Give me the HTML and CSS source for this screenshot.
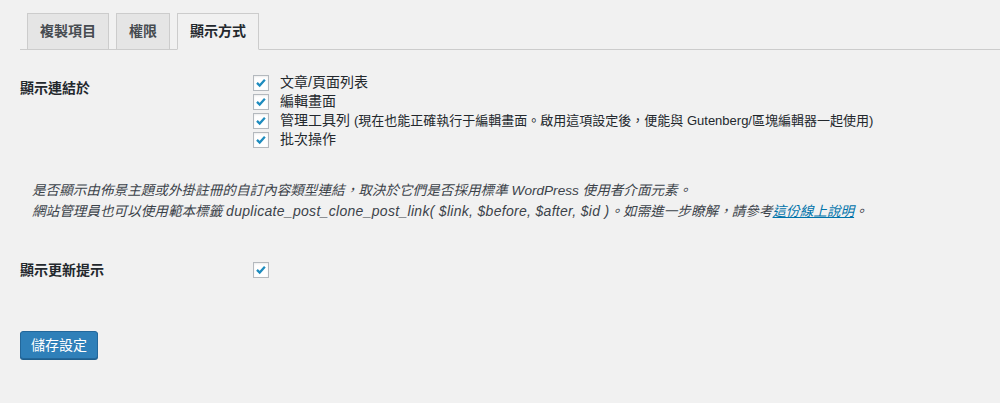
FILE: index.html
```html
<!DOCTYPE html>
<html lang="zh-Hant">
<head>
<meta charset="utf-8">
<title>Duplicate Post 設定</title>
<link rel="stylesheet" href="styles.css">
</head>
<body>
<div class="wrap">
  <nav class="tabs">
    <a class="tab">複製項目</a>
    <a class="tab">權限</a>
    <a class="tab active">顯示方式</a>
  </nav>

  <div class="row row-links">
    <div class="th">顯示連結於</div>
    <div class="td">
      <label class="opt"><span class="cb"><svg viewBox="0 0 16 16"><path d="M3.4 7.8 L6.5 10.9 L12.4 4.4" /></svg></span>文章/頁面列表</label>
      <label class="opt"><span class="cb"><svg viewBox="0 0 16 16"><path d="M3.4 7.8 L6.5 10.9 L12.4 4.4" /></svg></span>編輯畫面</label>
      <label class="opt"><span class="cb"><svg viewBox="0 0 16 16"><path d="M3.4 7.8 L6.5 10.9 L12.4 4.4" /></svg></span>管理工具列 <small class="note">(現在也能正確執行于編輯畫面。啟用這項設定後，便能與 Gutenberg/區塊編輯器一起使用)</small></label>
      <label class="opt"><span class="cb"><svg viewBox="0 0 16 16"><path d="M3.4 7.8 L6.5 10.9 L12.4 4.4" /></svg></span>批次操作</label>
    </div>
  </div>

  <p class="desc">是否顯示由佈景主題或外掛註冊的自訂內容類型連結，取決於它們是否採用標準 WordPress 使用者介面元素。<br>網站管理員也可以使用範本標籤 <span class="code">duplicate_post_clone_post_link( $link, $before, $after, $id )</span>。如需進一步瞭解，請參考<a class="link" href="#">這份線上說明</a>。</p>

  <div class="row row-notice">
    <div class="th">顯示更新提示</div>
    <div class="td">
      <span class="cb"><svg viewBox="0 0 16 16"><path d="M3.4 7.8 L6.5 10.9 L12.4 4.4" /></svg></span>
    </div>
  </div>

  <div class="submit">
    <button class="btn" type="button">儲存設定</button>
  </div>
</div>
</body>
</html>
```

FILE: styles.css
```css
html, body {
  margin: 0;
  padding: 0;
  background: #f1f1f1;
}
body {
  font-family: "Liberation Sans", "Noto Sans CJK TC", sans-serif;
  font-size: 14px;
  color: #23282d;
  height: 403px;
  overflow: hidden;
}
.wrap {
  padding: 12px 0 0 20px;
}
.tabs {
  display: flex;
  align-items: flex-end;
  border-bottom: 1px solid #cccccc;
  padding-left: 7px;
  gap: 7px;
  height: 37px;
}
.tab {
  display: block;
  box-sizing: border-box;
  height: 37px;
  padding: 0 12px;
  line-height: 35px;
  border: 1px solid #cccccc;
  background: #e5e5e5;
  color: #464b50;
  font-weight: 700;
  font-size: 14px;
  margin-bottom: -1px;
  border-bottom-color: #cccccc;
}
.tab.active {
  background: #f1f1f1;
  color: #23282d;
  border-bottom-color: #f1f1f1;
}
.row {
  display: flex;
}
.th {
  width: 233px;
  flex: none;
  font-weight: 700;
  line-height: 20px;
}
.row-links {
  margin-top: 23px;
}
.row-links .th {
  padding-top: 5px;
}
.td {
  display: flex;
  flex-direction: column;
}
.opt {
  display: flex;
  align-items: center;
  height: 19px;
  line-height: 19px;
  white-space: nowrap;
}
.cb {
  box-sizing: border-box;
  width: 16px;
  height: 16px;
  border: 1px solid #b4b9be;
  background: #fff;
  box-shadow: inset 0 1px 2px rgba(0,0,0,.08);
  margin-right: 11px;
  flex: none;
  display: block;
}
.cb svg {
  display: block;
  width: 14px;
  height: 14px;
}
.cb path {
  fill: none;
  stroke: #1e8cbe;
  stroke-width: 2.6;
  stroke-linecap: butt;
  stroke-linejoin: miter;
}
.note {
  font-size: 13px;
  margin-left: 4px;
}
.desc {
  margin: 32px 0 0 12px;
  font-style: italic;
  font-size: 13.6px;
  line-height: 20px;
  color: #3c434a;
}
.code {
  font-size: 14px;
  letter-spacing: 0.3px;
}
.link {
  color: #0073aa;
  text-decoration: underline;
}
.row-notice {
  margin-top: 38px;
  align-items: flex-start;
}
.row-notice .td {
  padding-top: 2px;
}
.submit {
  margin-top: 51px;
}
.btn {
  font-family: inherit;
  font-size: 14px;
  color: #fff;
  background: #2f80b9;
  border: 1px solid #23679a;
  border-radius: 3px;
  height: 28px;
  padding: 0 10px;
  line-height: 26px;
  box-shadow: 0 1px 0 #1f5f8d;
  cursor: pointer;
}
```
